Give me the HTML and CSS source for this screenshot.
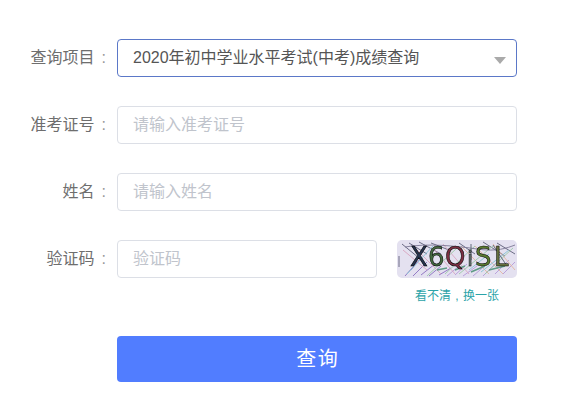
FILE: index.html
```html
<!DOCTYPE html>
<html lang="zh">
<head>
<meta charset="utf-8">
<title>成绩查询</title>
<link rel="stylesheet" href="styles.css">
</head>
<body>
<form class="form">
  <div class="row">
    <label class="label">查询项目<span class="colon">:</span></label>
    <div class="field field-active">
      <span class="value">2020年初中学业水平考试(中考)成绩查询</span>
      <span class="arrow"></span>
    </div>
  </div>
  <div class="row">
    <label class="label">准考证号<span class="colon">:</span></label>
    <div class="field"><span class="placeholder">请输入准考证号</span></div>
  </div>
  <div class="row">
    <label class="label">姓名<span class="colon">:</span></label>
    <div class="field"><span class="placeholder">请输入姓名</span></div>
  </div>
  <div class="row row-captcha">
    <label class="label">验证码<span class="colon">:</span></label>
    <div class="field field-short"><span class="placeholder">验证码</span></div>
    <div class="captcha-box">
      <svg class="captcha" viewBox="0 0 120 38" width="120" height="38">
        <rect width="120" height="38" fill="#e4e1f0"/>
        <g fill="none" stroke-width="0.9">
          <path d="M2 16 L2 27 M5 4 L22 18 M12 3 L30 14 M22 2 L44 14 M34 3 L52 10 M62 3 L78 14 M86 2 L108 16 M100 3 L118 14" stroke="#5e5f78"/>
          <path d="M8 36 L24 18 M16 36 L30 22 M24 35 L38 24 M32 36 L44 26 M42 35 L54 28 M14 30 L20 22" stroke="#8a6fc0"/>
          <path d="M50 36 L62 26 M58 35 L70 24 M66 36 L80 26 M76 36 L90 24 M86 36 L100 22 M98 34 L112 20 M106 34 L118 22" stroke="#b49ad8"/>
          <path d="M6 10 L30 30 M18 8 L44 34 M36 8 L58 34 M46 4 L72 34" stroke="#d8a5c0"/>
          <path d="M64 6 L92 34 M78 6 L106 34 M96 4 L118 30" stroke="#e3b6a2"/>
          <path d="M30 36 L60 8 M48 34 L78 6 M62 34 L96 6 M88 34 L116 8" stroke="#9cc9a8"/>
          <path d="M10 34 L36 6 M72 30 L92 14 M84 32 L112 10" stroke="#86c3d4"/>
          <path d="M58 30 L68 26 M74 32 L88 26 M92 30 L108 26 M40 30 L50 28" stroke="#5f9a86" stroke-width="1.5"/>
          <path d="M8 7 C30 3 60 6 80 9 S110 8 118 5" stroke="#7c7794"/>
          <path d="M74 4 L74 20 M96 5 L110 26" stroke="#55606e"/>
        </g>
        <g class="captcha-text">
          <text x="13" y="26" fill="#27344f">X</text>
          <text x="31" y="26" fill="#456a40">6</text>
          <text x="48" y="26" fill="#7c2f42">Q</text>
          <text x="70" y="26" class="thin" fill="#6f7f7c">i</text>
          <text x="78" y="26" fill="#5a7a30">S</text>
          <text x="97" y="26" fill="#66703f">L</text>
        </g>
      </svg>
      <a class="refresh">看不清 , 换一张</a>
    </div>
  </div>
  <div class="actions">
    <button type="button" class="submit">查 询</button>
  </div>
</form>
</body>
</html>
```

FILE: styles.css
```css
* { box-sizing: border-box; }
html, body { margin: 0; padding: 0; background: #fff; }
body {
  font-family: "Liberation Sans", "Noto Sans CJK SC", sans-serif;
  font-size: 16px;
  width: 579px;
  height: 406px;
  overflow: hidden;
}
.form {
  display: flex;
  flex-direction: column;
  gap: 29px;
  padding-top: 39px;
}
.row {
  display: flex;
  align-items: flex-start;
}
.label {
  width: 117px;
  height: 38px;
  line-height: 38px;
  padding-right: 11px;
  text-align: right;
  color: #6e6e6e;
  white-space: nowrap;
}
.colon { margin-left: 7px; color: #999; }
.field {
  width: 400px;
  height: 38px;
  border: 1px solid #dcdfe6;
  border-radius: 4px;
  padding: 0 15px;
  line-height: 36px;
  display: flex;
  align-items: center;
  justify-content: space-between;
}
.field-active { border-color: #5b78c8; }
.field-short { width: 260px; }
.value { color: #555; }
.placeholder { color: #c0c4cc; }
.arrow {
  width: 0;
  height: 0;
  margin-right: -5px;
  margin-top: 4px;
  border-left: 6px solid transparent;
  border-right: 6px solid transparent;
  border-top: 7px solid #aaa;
}
.row-captcha { height: 67px; }
.captcha-box {
  margin-left: 20px;
  width: 120px;
  display: flex;
  flex-direction: column;
  align-items: center;
}
.captcha {
  display: block;
  border-radius: 5px;
  filter: blur(0.4px);
}
.captcha-text text {
  font-family: "DejaVu Sans", sans-serif;
  font-size: 26px;
  font-weight: 400;
  stroke: currentColor;
  stroke-width: 0.5;
}
.captcha-text .thin { font-size: 22px; }
.refresh {
  margin-top: 9px;
  font-size: 12px;
  line-height: 18px;
  word-spacing: 1px;
  color: #2ba3a8;
  white-space: nowrap;
}
.actions { padding-left: 117px; }
.submit {
  display: block;
  width: 400px;
  height: 46px;
  border: 0;
  border-radius: 4px;
  background: #517dff;
  color: #fff;
  font-family: inherit;
  font-size: 20px;
  word-spacing: -4px;
  padding: 0 0 3px;
}
```
